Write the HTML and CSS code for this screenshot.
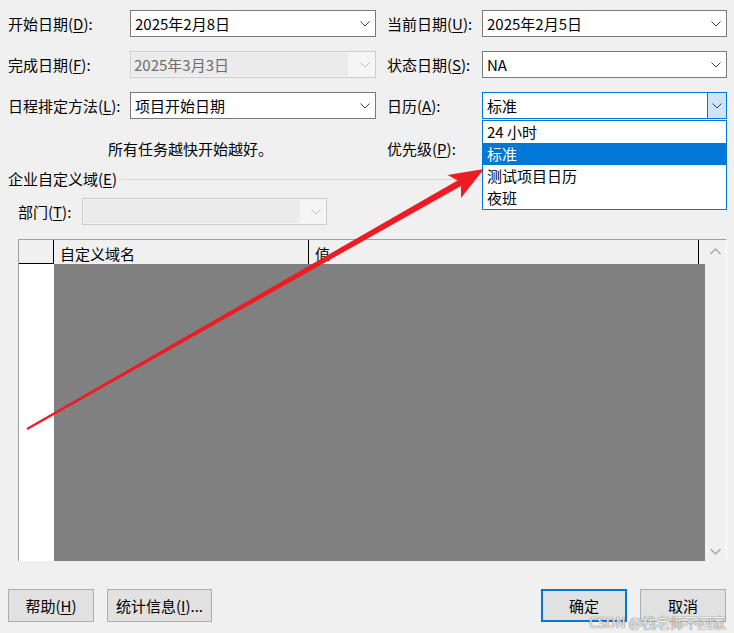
FILE: index.html
```html
<!DOCTYPE html>
<html lang="zh-CN">
<head>
<meta charset="utf-8">
<title>项目信息</title>
<link rel="stylesheet" href="styles.css">
</head>
<body>
<div class="dlg">
  <div class="form">
    <div class="lbl">开始日期(<u>D</u>):</div>
    <div class="combo"><span class="val">2025年2月8日</span><svg class="chev" width="10" height="6" viewBox="0 0 10 6"><path d="M0.5 0.5 L5 5 L9.5 0.5" /></svg></div>
    <div class="lbl r">当前日期(<u>U</u>):</div>
    <div class="combo"><span class="val">2025年2月5日</span><svg class="chev" width="10" height="6" viewBox="0 0 10 6"><path d="M0.5 0.5 L5 5 L9.5 0.5" /></svg></div>

    <div class="lbl">完成日期(<u>F</u>):</div>
    <div class="combo dis"><span class="val">2025年3月3日</span><svg class="chev" width="10" height="6" viewBox="0 0 10 6"><path d="M0.5 0.5 L5 5 L9.5 0.5" /></svg></div>
    <div class="lbl r">状态日期(<u>S</u>):</div>
    <div class="combo"><span class="val">NA</span><svg class="chev" width="10" height="6" viewBox="0 0 10 6"><path d="M0.5 0.5 L5 5 L9.5 0.5" /></svg></div>

    <div class="lbl">日程排定方法(<u>L</u>):</div>
    <div class="combo"><span class="val">项目开始日期</span><svg class="chev" width="10" height="6" viewBox="0 0 10 6"><path d="M0.5 0.5 L5 5 L9.5 0.5" /></svg></div>
    <div class="lbl r">日历(<u>A</u>):</div>
    <div class="combo open"><span class="val">标准</span><span class="btn"><svg class="chev" width="10" height="6" viewBox="0 0 10 6"><path d="M0.5 0.5 L5 5 L9.5 0.5" /></svg></span></div>
  </div>

  <div class="note">
    <div class="note-text">所有任务越快开始越好。</div>
    <div class="lbl pri">优先级(<u>P</u>):</div>
  </div>

  <div class="group">
    <span>企业自定义域(<u>E</u>)</span>
    <span class="gline"></span>
  </div>

  <div class="dept">
    <div class="lbl dept-lbl">部门(<u>T</u>):</div>
    <div class="combo dis dept-combo"><span class="val"></span><svg class="chev" width="10" height="6" viewBox="0 0 10 6"><path d="M0.5 0.5 L5 5 L9.5 0.5" /></svg></div>
  </div>

  <div class="grid">
    <div class="grid-main">
      <div class="ghead">
        <div class="corner"></div>
        <div class="hcell c1">自定义域名</div>
        <div class="hcell c2">值</div>
        <div class="hrest"></div>
      </div>
      <div class="gbody">
        <div class="rowhdr"></div>
        <div class="gdata"></div>
      </div>
    </div>
    <div class="vscroll">
      <svg class="sarrow" width="11" height="7" viewBox="0 0 11 7"><path d="M0.5 6 L5.5 1 L10.5 6" /></svg>
      <svg class="sarrow" width="11" height="7" viewBox="0 0 11 7"><path d="M0.5 1 L5.5 6 L10.5 1" /></svg>
    </div>
  </div>

  <div class="buttons">
    <div class="button help">帮助(<u>H</u>)</div>
    <div class="button stats">统计信息(<u>I</u>)...</div>
    <div class="button ok">确定</div>
    <div class="button cancel">取消</div>
  </div>

  <ul class="droplist">
    <li>24 小时</li>
    <li class="sel">标准</li>
    <li>测试项目日历</li>
    <li>夜班</li>
  </ul>

  <svg class="arrow" width="734" height="633" viewBox="0 0 734 633">
    <polygon points="484,169 447.5,175 457.5,180.5 26.5,428.1 27.5,429.9 461,186 461,198" />
  </svg>

  <div class="watermark">CSDN @栈老师不回家</div>
</div>
</body>
</html>
```
FILE: styles.css
```css
html, body {
  margin: 0;
  padding: 0;
}
body {
  background: #f0f0f0;
  font-family: "Noto Sans CJK SC", "Microsoft YaHei", sans-serif;
  font-size: 15px;
  color: #000;
  width: 734px;
  height: 633px;
  overflow: hidden;
}
u {
  text-decoration: underline;
  text-underline-offset: 2px;
  text-decoration-thickness: 1px;
}
.dlg {
  position: relative;
  box-sizing: border-box;
  width: 734px;
  height: 633px;
  padding: 10px 0 0 8px;
}
.form {
  display: grid;
  grid-template-columns: 122px 246px 106px 245px;
  grid-auto-rows: 27px;
  row-gap: 14px;
  align-items: center;
}
.lbl {
  line-height: 20px;
  white-space: nowrap;
}
.lbl.r {
  padding-left: 11px;
}
.combo {
  position: relative;
  box-sizing: border-box;
  height: 27px;
  border: 1px solid #7a7a7a;
  background: #fff;
  display: flex;
  align-items: center;
}
.combo .val {
  padding-left: 4px;
  line-height: 20px;
  white-space: nowrap;
}
.chev {
  position: absolute;
  right: 5px;
  top: 10px;
}
.chev path {
  fill: none;
  stroke: #404040;
  stroke-width: 1;
}
.combo.dis {
  border-color: #cccccc;
  background: #f5f5f5;
}
.combo.dis .val {
  align-self: stretch;
  margin: 1px 0 1px 1px;
  padding-left: 2px;
  width: 214px;
  background: #ebebeb;
  color: #6d6d6d;
  display: flex;
  align-items: center;
}
.combo.dis .chev path {
  stroke: #bfbfbf;
}
.combo.open {
  border-color: #0078d7;
}
.combo.open .btn {
  position: absolute;
  right: 0;
  top: 0;
  bottom: 0;
  width: 18px;
  background: #cce4f7;
  border-left: 1px solid #0078d7;
}
.combo.open .btn .chev {
  right: 4px;
  top: 10px;
}
.note {
  margin-top: 20px;
  height: 20px;
  display: grid;
  grid-template-columns: 368px 106px;
  line-height: 20px;
}
.note-text {
  padding-left: 100px;
}
.lbl.pri {
  padding-left: 11px;
}
.group {
  margin-top: 10px;
  height: 20px;
  line-height: 20px;
  display: flex;
  align-items: center;
  margin-right: 7px;
}
.gline {
  flex: 1;
  height: 1px;
  background: #d9d9d9;
  margin-left: 4px;
}
.dept {
  margin-top: 9px;
  display: flex;
  align-items: center;
  padding-left: 10px;
  height: 27px;
}
.dept-lbl {
  width: 64px;
}
.dept-combo {
  width: 245px;
}
.dept-combo .val {
  width: 222px;
}
.grid {
  margin-top: 14px;
  margin-left: 10px;
  box-sizing: border-box;
  width: 709px;
  height: 322px;
  border-top: 1px solid #a0a0a0;
  border-left: 1px solid #a0a0a0;
  border-right: 1px solid #ffffff;
  display: flex;
}
.grid-main {
  flex: 1;
  display: flex;
  flex-direction: column;
}
.ghead {
  height: 24px;
  display: flex;
  background: #f0f0f0;
}
.corner {
  box-sizing: border-box;
  width: 35px;
  border-right: 1px solid #000;
  border-bottom: 1px solid #000;
}
.hcell {
  box-sizing: border-box;
  border-right: 1px solid #000;
  padding-left: 6px;
  line-height: 27px;
  white-space: nowrap;
}
.c1 {
  width: 255px;
}
.c2 {
  width: 390px;
}
.hrest {
  flex: 1;
}
.gbody {
  flex: 1;
  display: flex;
}
.rowhdr {
  width: 35px;
  background: #fff;
}
.gdata {
  flex: 1;
  background: #808080;
}
.vscroll {
  width: 21px;
  background: #f0f0f0;
  display: flex;
  flex-direction: column;
  justify-content: space-between;
  align-items: center;
  padding: 8px 0 6px;
  box-sizing: border-box;
}
.sarrow path {
  fill: none;
  stroke: #a6a6a6;
  stroke-width: 1.3;
}
.buttons {
  margin-top: 28px;
  margin-right: 8px;
  display: flex;
  height: 33px;
}
.button {
  box-sizing: border-box;
  height: 33px;
  border: 1px solid #adadad;
  background: #e1e1e1;
  display: flex;
  align-items: center;
  justify-content: center;
  line-height: 20px;
  white-space: nowrap;
}
.help {
  width: 86px;
}
.stats {
  width: 105px;
  margin-left: 13px;
}
.ok {
  width: 86px;
  margin-left: auto;
  border: 2px solid #0078d7;
}
.cancel {
  width: 86px;
  margin-left: 13px;
}
.droplist {
  position: absolute;
  left: 482px;
  top: 120px;
  width: 245px;
  box-sizing: border-box;
  margin: 0;
  padding: 0;
  list-style: none;
  background: #fff;
  border: 1px solid #0078d7;
}
.droplist li {
  height: 22px;
  line-height: 22px;
  padding-left: 4px;
}
.droplist li.sel {
  background: #0078d7;
  color: #fff;
}
.arrow {
  position: absolute;
  left: 0;
  top: 0;
  pointer-events: none;
}
.arrow polygon {
  fill: #ed1c24;
}
.watermark {
  position: absolute;
  right: 8px;
  bottom: 3px;
  font-size: 14px;
  line-height: 16px;
  color: rgba(255, 255, 255, 0.9);
  text-shadow: 0 0 1px #6a6a6a, 0 0 1px #6a6a6a;
  white-space: nowrap;
}
```
